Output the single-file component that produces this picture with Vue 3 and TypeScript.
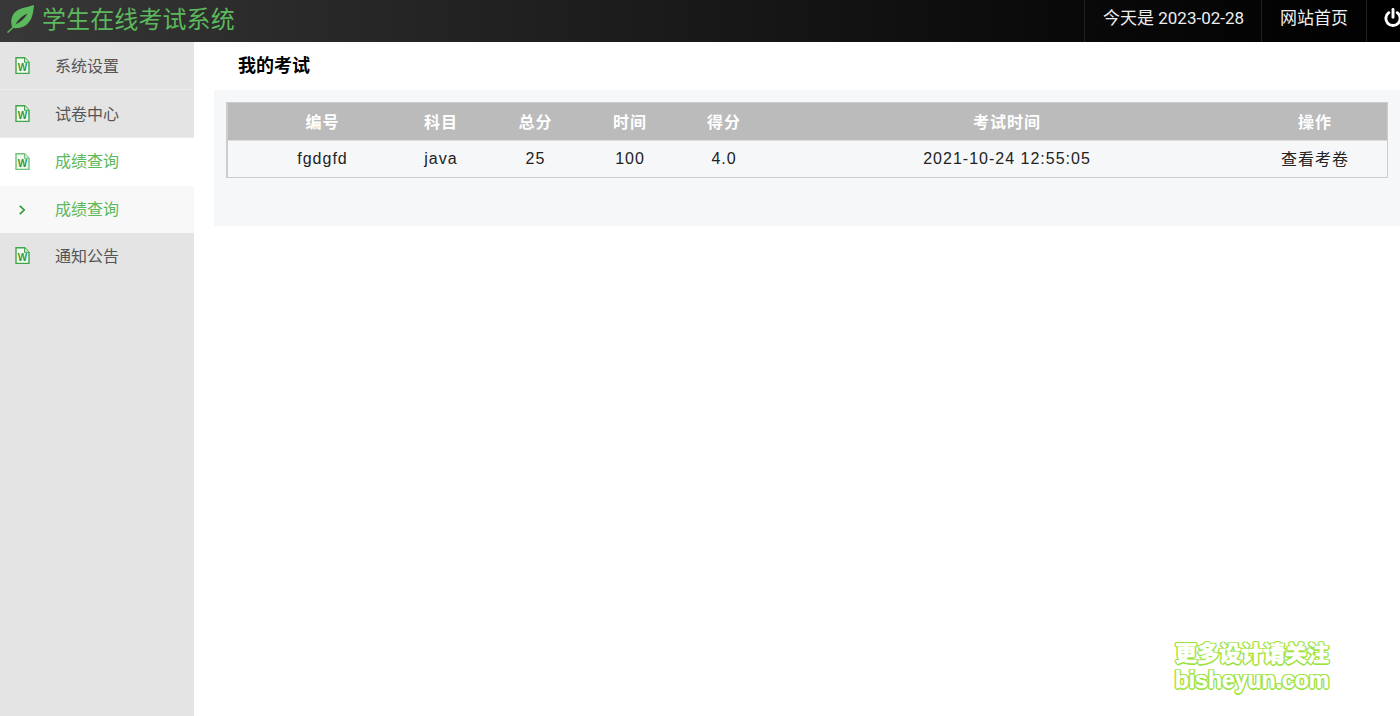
<script setup lang="ts">
interface NavItem { label: string; kind: 'doc' | 'chevron'; state: string }
const nav: NavItem[] = [
  { label: '系统设置', kind: 'doc', state: '' },
  { label: '试卷中心', kind: 'doc', state: '' },
  { label: '成绩查询', kind: 'doc', state: 'active' },
  { label: '成绩查询', kind: 'chevron', state: 'sub' },
  { label: '通知公告', kind: 'doc', state: 'last' },
]
const heads = ['编号', '科目', '总分', '时间', '得分', '考试时间', '操作']
const cells = ['fgdgfd', 'java', '25', '100', '4.0', '2021-10-24 12:55:05', '查看考卷']
</script>

<template>
  <div class="page">
    <header class="top">
      <div class="brand">
        <svg class="leaf" width="28" height="28" viewBox="0 0 28 28">
          <path d="M27 0C18 3 8 3 5 12C3.5 17 4.5 21 6 23C12 24 20 22 24 14C26 10 26.5 5 27 0Z" fill="#5cb85c" />
          <path d="M0.5 27.5L6.5 22" stroke="#5cb85c" stroke-width="1.5" fill="none" />
          <path d="M8.5 19.5C11 14.5 15 11 20.5 8.5C18 13 14 17 8.5 19.5Z" fill="#333" />
        </svg>
        <span class="brand-text">学生在线考试系统</span>
      </div>
      <div class="top-right">
        <div class="cell date">今天是 2023-02-28</div>
        <div class="cell">网站首页</div>
        <div class="cell power">
          <svg width="18" height="20" viewBox="0 0 16 18">
            <path d="M4.2 4.2A6.4 6.4 0 1 0 11.8 4.2" fill="none" stroke="#fff" stroke-width="2.6" stroke-linecap="round" />
            <path d="M8 1.4V8.4" fill="none" stroke="#fff" stroke-width="2.6" stroke-linecap="round" />
          </svg>
        </div>
      </div>
    </header>
    <div class="body">
      <aside class="side">
        <div v-for="(n, i) in nav" :key="i" class="nav" :class="n.state">
          <svg v-if="n.kind === 'doc'" class="ico" width="16" height="18" viewBox="0 0 16 18">
            <path class="doc" d="M1 0.8H9.6L14 5.2V16.4H1Z" />
            <path class="fold" d="M9.6 0.8V5.2H14" />
            <text x="7.5" y="14" text-anchor="middle" class="w">W</text>
          </svg>
          <svg v-else class="ico" width="16" height="18" viewBox="0 0 16 18">
            <path d="M4.8 4.8L9.2 9L4.8 13.2" fill="none" stroke="#2f9a3e" stroke-width="1.7" />
          </svg>
          <span class="lbl">{{ n.label }}</span>
        </div>
      </aside>
      <main class="main">
        <h1 class="title">我的考试</h1>
        <section class="panel">
          <div class="table">
            <div class="row head">
              <div v-for="h in heads" :key="h" class="c">{{ h }}</div>
            </div>
            <div class="row data">
              <div v-for="c in cells" :key="c" class="c">{{ c }}</div>
            </div>
          </div>
        </section>
      </main>
    </div>
    <div class="mark">
      <div class="mark-cn">更多设计请关注</div>
      <div class="mark-en">bisheyun.com</div>
    </div>
  </div>
</template>

<style>
html, body { margin: 0; background: #fff; }
</style>

<style scoped>
.page {
  position: relative;
  width: 1400px;
  height: 716px;
  overflow: hidden;
  display: flex;
  flex-direction: column;
  font-family: "Liberation Sans", "Noto Sans CJK SC", sans-serif;
}
.top {
  height: 42px;
  flex: none;
  display: flex;
  justify-content: space-between;
  background: linear-gradient(90deg, #383838 0%, #2a2a2a 20%, #0a0a0a 75%, #000 100%);
  color: #fff;
}
.brand { display: flex; align-items: center; padding-left: 7px; }
.leaf { margin-right: 7px; margin-top: -4px; }
.brand-text { font-size: 24px; line-height: 36px; color: #5cb85c; letter-spacing: 0.1px; padding-bottom: 3px; }
.top-right { display: flex; width: 316px; flex: none; }
.cell {
  display: flex;
  align-items: center;
  padding: 0 18px 10px;
  border-left: 1px solid #222;
  font-size: 17px;
  color: #eee;
  white-space: nowrap;
  font-family: Roboto, "Noto Sans CJK SC", sans-serif;
}
.date { width: 140px; }
.power { flex: 1; padding: 0 0 6px 17px; background: #000; }
.body { flex: 1; display: flex; min-height: 0; }
.side { width: 194px; flex: none; background: #e4e4e4; }
.nav {
  height: 48px;
  box-sizing: border-box;
  display: flex;
  align-items: center;
  padding-left: 15px;
  font-size: 16px;
  color: #555;
  border-bottom: 1px solid #ececec;
}
.lbl { margin-bottom: 2px; }
.nav.active { background: #fff; color: #5cb85c; border-bottom: none; padding-bottom: 1px; }
.nav.active .lbl { margin-bottom: 4px; }
.nav.sub { height: 47px; background: #f8f8f8; color: #5cb85c; border-bottom: none; }
.nav.sub .lbl { margin-bottom: 4px; }
.nav.last { height: 47px; border-bottom: none; padding-bottom: 1px; }
.ico { margin-right: 24px; flex: none; }
.doc { fill: #f4f8f2; stroke: #3fa64a; stroke-width: 1.4; }
.fold { fill: #dcefdc; stroke: #3fa64a; stroke-width: 1.1; }
.active .doc, .active .fold { stroke: #6cc276; }
.w { font-size: 10px; font-weight: 700; fill: #2f9a3e; font-family: "Liberation Sans", sans-serif; }
.main { flex: 1; min-width: 0; padding-left: 20px; }
.title {
  margin: 0;
  height: 48px;
  line-height: 48px;
  padding-left: 24px;
  font-size: 18px;
  font-weight: 700;
  color: #000;
}
.panel {
  height: 136px;
  box-sizing: border-box;
  padding: 12px;
  background: #f6f7f9;
}
.table {
  border: 1px solid #ccc;
  border-left-width: 2px;
  height: 76px;
  box-sizing: border-box;
}
.row {
  display: grid;
  grid-template-columns: 166px 94px 95px 94px 94px 472px 144px;
  align-items: center;
  text-align: center;
}
.c:first-child { padding-left: 23px; }
.head {
  height: 38px;
  padding-bottom: 2px;
  background: #bbb;
  color: #fff;
  font-size: 16px;
  font-weight: 700;
  letter-spacing: 1px;
  border-bottom: 1px solid #ddd;
  box-sizing: border-box;
}
.data {
  height: 36px;
  font-size: 16px;
  letter-spacing: 1px;
  color: #222;
}
.data .c:last-child { margin-bottom: 2px; }
.mark {
  position: absolute;
  left: 1174px;
  top: 640px;
  width: 156px;
  text-align: center;
  color: #fff;
  font-weight: 900;
  -webkit-text-stroke: 0.5px #fff;
  text-shadow:
    1.5px 0 0 #9be23c, -1.5px 0 0 #9be23c, 0 1.5px 0 #9be23c, 0 -1.5px 0 #9be23c,
    1.2px 1.2px 0 #9be23c, -1.2px 1.2px 0 #9be23c, 1.2px -1.2px 0 #9be23c, -1.2px -1.2px 0 #9be23c;
}
.mark-cn { font-size: 22px; line-height: 27px; white-space: nowrap; }
.mark-en { font-size: 23px; line-height: 26px; white-space: nowrap; font-family: "Liberation Sans", sans-serif; font-weight: 700; }
</style>
